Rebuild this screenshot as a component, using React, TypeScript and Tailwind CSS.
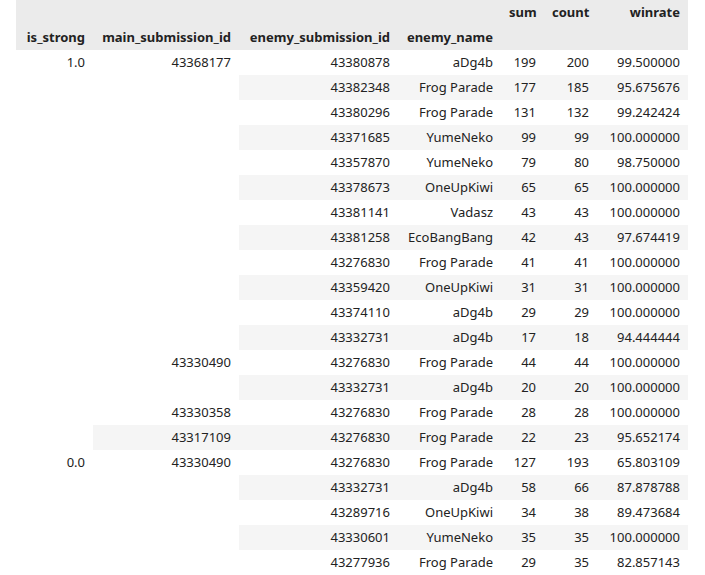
type R = { s?: [string, number]; m?: [string, number]; e: string; n: string; sum: number; cnt: number; w: string };
const data: R[] = [
  { s: ["1.0", 16], m: ["43368177", 12], e: "43380878", n: "aDg4b", sum: 199, cnt: 200, w: "99.500000" },
  { e: "43382348", n: "Frog Parade", sum: 177, cnt: 185, w: "95.675676" },
  { e: "43380296", n: "Frog Parade", sum: 131, cnt: 132, w: "99.242424" },
  { e: "43371685", n: "YumeNeko", sum: 99, cnt: 99, w: "100.000000" },
  { e: "43357870", n: "YumeNeko", sum: 79, cnt: 80, w: "98.750000" },
  { e: "43378673", n: "OneUpKiwi", sum: 65, cnt: 65, w: "100.000000" },
  { e: "43381141", n: "Vadasz", sum: 43, cnt: 43, w: "100.000000" },
  { e: "43381258", n: "EcoBangBang", sum: 42, cnt: 43, w: "97.674419" },
  { e: "43276830", n: "Frog Parade", sum: 41, cnt: 41, w: "100.000000" },
  { e: "43359420", n: "OneUpKiwi", sum: 31, cnt: 31, w: "100.000000" },
  { e: "43374110", n: "aDg4b", sum: 29, cnt: 29, w: "100.000000" },
  { e: "43332731", n: "aDg4b", sum: 17, cnt: 18, w: "94.444444" },
  { m: ["43330490", 2], e: "43276830", n: "Frog Parade", sum: 44, cnt: 44, w: "100.000000" },
  { e: "43332731", n: "aDg4b", sum: 20, cnt: 20, w: "100.000000" },
  { m: ["43330358", 1], e: "43276830", n: "Frog Parade", sum: 28, cnt: 28, w: "100.000000" },
  { m: ["43317109", 1], e: "43276830", n: "Frog Parade", sum: 22, cnt: 23, w: "95.652174" },
  { s: ["0.0", 6], m: ["43330490", 6], e: "43276830", n: "Frog Parade", sum: 127, cnt: 193, w: "65.803109" },
  { e: "43332731", n: "aDg4b", sum: 58, cnt: 66, w: "87.878788" },
  { e: "43289716", n: "OneUpKiwi", sum: 34, cnt: 38, w: "89.473684" },
  { e: "43330601", n: "YumeNeko", sum: 35, cnt: 35, w: "100.000000" },
  { e: "43277936", n: "Frog Parade", sum: 29, cnt: 35, w: "82.857143" },
  { e: "43332731", n: "aDg4b", sum: 20, cnt: 22, w: "90.909091" },
];

const td = "h-[25px] px-2 text-right align-top leading-[25px] whitespace-nowrap overflow-hidden";

export default function App() {
  return (
    <div className="h-[575px] overflow-hidden bg-white pl-4 text-[13px] text-[#222]" style={{ fontFamily: '"Noto Sans", "Open Sans", sans-serif' }}>
      <table className="table-fixed w-[672px] border-collapse">
        <colgroup>
          <col className="w-[77px]" />
          <col className="w-[146px]" />
          <col className="w-[159px]" />
          <col className="w-[103px]" />
          <col className="w-[43px]" />
          <col className="w-[53px]" />
          <col className="w-[91px]" />
        </colgroup>
        <thead className="bg-[#ebebeb] font-bold">
          <tr>
            <th className={td}></th>
            <th className={td}></th>
            <th className={td}></th>
            <th className={td}></th>
            <th className={td}>sum</th>
            <th className={td}>count</th>
            <th className={td}>winrate</th>
          </tr>
          <tr>
            <th className={`${td} text-left`}>is_strong</th>
            <th className={`${td} text-left`}>main_submission_id</th>
            <th className={`${td} text-left`}>enemy_submission_id</th>
            <th className={`${td} text-left`}>enemy_name</th>
            <th className={td}></th>
            <th className={td}></th>
            <th className={td}></th>
          </tr>
        </thead>
        <tbody>
          {data.map((r, i) => {
            const bg = i % 2 === 1 ? "bg-[#f5f5f5]" : "bg-white";
            return (
              <tr key={i}>
                {r.s && <td rowSpan={r.s[1]} className={`${td} ${bg}`}>{r.s[0]}</td>}
                {r.m && <td rowSpan={r.m[1]} className={`${td} ${bg}`}>{r.m[0]}</td>}
                <td className={`${td} ${bg}`}>{r.e}</td>
                <td className={`${td} ${bg}`}>{r.n}</td>
                <td className={`${td} ${bg}`}>{r.sum}</td>
                <td className={`${td} ${bg}`}>{r.cnt}</td>
                <td className={`${td} ${bg}`}>{r.w}</td>
              </tr>
            );
          })}
        </tbody>
      </table>
    </div>
  );
}
